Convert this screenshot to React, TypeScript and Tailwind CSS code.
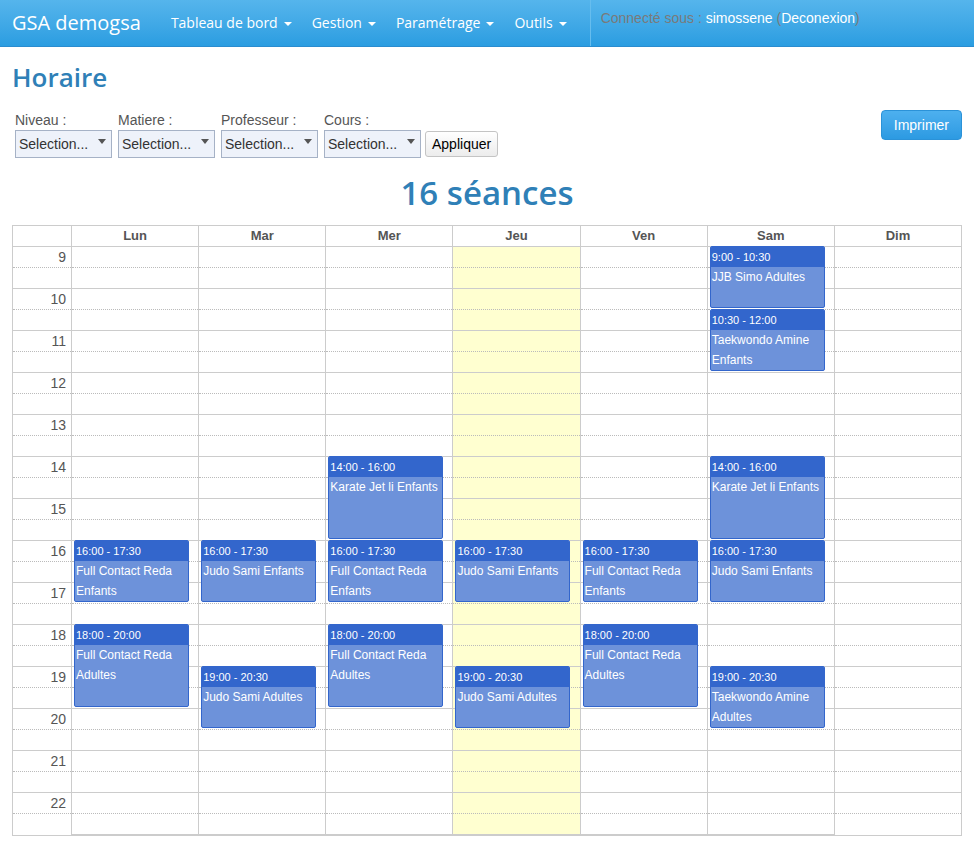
import { useState } from 'react';

type Seance = {
  day: number;
  start: number;
  end: number;
  label: string;
  time: string;
};

const days = ['Lun', 'Mar', 'Mer', 'Jeu', 'Ven', 'Sam', 'Dim'];
const hours = [9, 10, 11, 12, 13, 14, 15, 16, 17, 18, 19, 20, 21, 22];
const HOUR = 42;

const seances: Seance[] = [
  { day: 5, start: 9, end: 10.5, time: '9:00 - 10:30', label: 'JJB Simo Adultes' },
  { day: 5, start: 10.5, end: 12, time: '10:30 - 12:00', label: 'Taekwondo Amine Enfants' },
  { day: 2, start: 14, end: 16, time: '14:00 - 16:00', label: 'Karate Jet li Enfants' },
  { day: 5, start: 14, end: 16, time: '14:00 - 16:00', label: 'Karate Jet li Enfants' },
  { day: 0, start: 16, end: 17.5, time: '16:00 - 17:30', label: 'Full Contact Reda Enfants' },
  { day: 1, start: 16, end: 17.5, time: '16:00 - 17:30', label: 'Judo Sami Enfants' },
  { day: 2, start: 16, end: 17.5, time: '16:00 - 17:30', label: 'Full Contact Reda Enfants' },
  { day: 3, start: 16, end: 17.5, time: '16:00 - 17:30', label: 'Judo Sami Enfants' },
  { day: 4, start: 16, end: 17.5, time: '16:00 - 17:30', label: 'Full Contact Reda Enfants' },
  { day: 5, start: 16, end: 17.5, time: '16:00 - 17:30', label: 'Judo Sami Enfants' },
  { day: 0, start: 18, end: 20, time: '18:00 - 20:00', label: 'Full Contact Reda Adultes' },
  { day: 2, start: 18, end: 20, time: '18:00 - 20:00', label: 'Full Contact Reda Adultes' },
  { day: 4, start: 18, end: 20, time: '18:00 - 20:00', label: 'Full Contact Reda Adultes' },
  { day: 1, start: 19, end: 20.5, time: '19:00 - 20:30', label: 'Judo Sami Adultes' },
  { day: 3, start: 19, end: 20.5, time: '19:00 - 20:30', label: 'Judo Sami Adultes' },
  { day: 5, start: 19, end: 20.5, time: '19:00 - 20:30', label: 'Taekwondo Amine Adultes' },
];

function Caret() {
  return (
    <span className="inline-block ml-[6px] align-middle w-0 h-0 border-l-[4px] border-r-[4px] border-t-[4px] border-l-transparent border-r-transparent border-t-white" />
  );
}

function FilterSelect({ label }: { label: string }) {
  return (
    <div className="flex flex-col w-[97px]">
      <span className="text-[14px] leading-[18px] text-[#555]">{label}</span>
      <div className="mt-[1px] h-[28px] flex items-center justify-between border border-[#a6b2c6] bg-[#eef2fa] pl-[3px] pr-[5px]">
        <span className="text-[14px] text-[#333]">Selection...</span>
        <span className="w-0 h-0 border-l-[4px] border-r-[4px] border-t-[5px] border-l-transparent border-r-transparent border-t-[#555] mb-[6px]" />
      </div>
    </div>
  );
}

export default function App() {
  const [list] = useState(seances);

  return (
    <div className="min-h-screen bg-white font-['Liberation_Sans',Arial,sans-serif] text-[#333]">
      <header className="h-[47px] bg-gradient-to-b from-[#55b5ec] to-[#2a9de1] border-b border-[#2a8ccf] flex font-['Open_Sans',sans-serif]">
        <div className="pl-[12px] pr-[30px] flex items-center text-[20px] text-white">GSA demogsa</div>
        <nav className="flex items-center text-[14px] text-white gap-[20px] pb-[2px]">
          <span>Tableau de bord<Caret /></span>
          <span>Gestion<Caret /></span>
          <span>Paramétrage<Caret /></span>
          <span>Outils<Caret /></span>
        </nav>
        <div className="ml-[23px] border-l border-[#66bdee] pl-[10px] pt-[8px] text-[14px] font-['Liberation_Sans',Arial,sans-serif] text-[#7a7a7a]">
          Connecté sous : <span className="text-white">simossene</span> (<span className="text-white">Deconexion</span>)
        </div>
      </header>

      <main className="px-[12px]">
        <h1 className="mt-[14px] text-[26px] leading-[32px] font-semibold text-[#2f80b7] font-['Open_Sans',sans-serif]">
          Horaire
        </h1>

        <div className="mt-[18px] flex justify-between">
          <div className="flex items-end gap-[6px] pl-[3px]">
            <FilterSelect label="Niveau :" />
            <FilterSelect label="Matiere :" />
            <FilterSelect label="Professeur :" />
            <FilterSelect label="Cours :" />
            <button className="mb-[1px] ml-[-2px] h-[26px] px-[6px] border border-[#c4c4c4] rounded-[3px] bg-gradient-to-b from-white to-[#ececec] text-[14px] text-black">
              Appliquer
            </button>
          </div>
          <button className="mt-[-1px] self-start h-[30px] px-[12px] rounded-[4px] border border-[#2b92d8] bg-gradient-to-b from-[#4db0ef] to-[#2c9ae2] text-[14px] text-white">
            Imprimer
          </button>
        </div>

        <div className="mt-[15px] text-center text-[33px] leading-[40px] font-semibold text-[#2f80b7] font-['Open_Sans',sans-serif]">
          {list.length} séances
        </div>

        <div className="mt-[12px] border border-[#cccccc] w-[950px]">
          <div className="grid grid-cols-[58px_repeat(7,1fr)] h-[21px] border-b border-[#cccccc]">
            <div />
            {days.map((d) => (
              <div key={d} className="border-l border-[#cccccc] text-center text-[13px] leading-[20px] font-bold text-[#555]">
                {d}
              </div>
            ))}
          </div>
          <div className="grid grid-cols-[58px_repeat(7,1fr)]">
            <div className="flex flex-col">
              {hours.map((h) => (
                <div key={h} className="h-[42px] border-b border-[#cccccc] last:border-b-0">
                  <div className="h-[21px] border-b border-dotted border-[#bbbbbb] text-right pr-[5px] text-[14px] leading-[20px] text-[#555]">
                    {h}
                  </div>
                </div>
              ))}
            </div>
            {days.map((d, i) => (
              <div key={d} className={`relative border-l border-[#cccccc] flex flex-col ${i === 3 ? 'bg-[#ffffd0]' : ''}`}>
                {hours.map((h) => (
                  <div key={h} className="h-[42px] border-b border-[#cccccc] last:border-b-0">
                    <div className="h-[21px] border-b border-dotted border-[#bbbbbb]" />
                  </div>
                ))}
                {list
                  .filter((s) => s.day === i)
                  .map((s) => (
                    <div
                      key={s.time + s.label}
                      className="absolute left-[2px] w-[115px] border border-[#3366cc] rounded-[2px] bg-[#6d92da] overflow-hidden text-white"
                      style={{ top: (s.start - 9) * HOUR - 1, height: (s.end - s.start) * HOUR - 1 }}
                    >
                      <div className="h-[20px] bg-[#3366cc] pl-[1px] text-[11px] leading-[20px]">{s.time}</div>
                      <div className="pl-[1px] text-[12px] leading-[20px]">{s.label}</div>
                    </div>
                  ))}
              </div>
            ))}
          </div>
        </div>
      </main>
    </div>
  );
}
